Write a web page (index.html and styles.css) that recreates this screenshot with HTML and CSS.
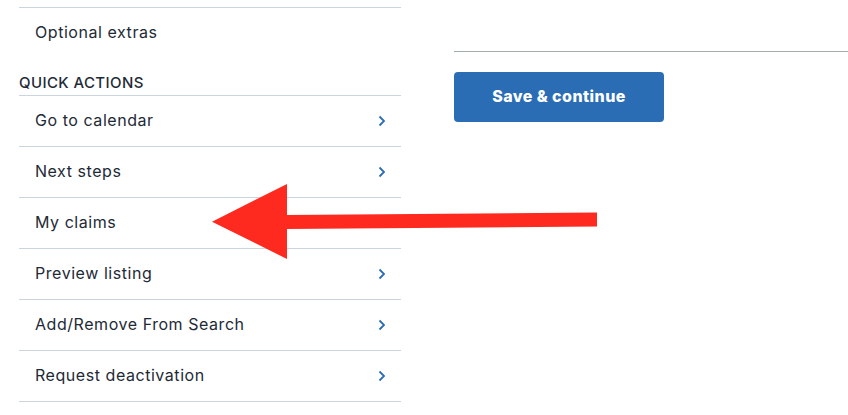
FILE: index.html
```html
<!DOCTYPE html>
<html>
<head>
<meta charset="utf-8">
<link rel="stylesheet" href="styles.css">
</head>
<body>
<div class="page">
  <aside class="sidebar">
    <div class="item item-top">Optional extras</div>
    <div class="heading">QUICK ACTIONS</div>
    <ul class="actions">
      <li class="item">Go to calendar<span class="chev"><svg width="8" height="12" viewBox="0 0 8 12"><path d="M1.5 1.5 L6 6 L1.5 10.5" fill="none" stroke="#2a6db5" stroke-width="1.8"/></svg></span></li>
      <li class="item">Next steps<span class="chev"><svg width="8" height="12" viewBox="0 0 8 12"><path d="M1.5 1.5 L6 6 L1.5 10.5" fill="none" stroke="#2a6db5" stroke-width="1.8"/></svg></span></li>
      <li class="item">My claims<span class="chev"><svg width="8" height="12" viewBox="0 0 8 12"><path d="M1.5 1.5 L6 6 L1.5 10.5" fill="none" stroke="#2a6db5" stroke-width="1.8"/></svg></span></li>
      <li class="item">Preview listing<span class="chev"><svg width="8" height="12" viewBox="0 0 8 12"><path d="M1.5 1.5 L6 6 L1.5 10.5" fill="none" stroke="#2a6db5" stroke-width="1.8"/></svg></span></li>
      <li class="item">Add/Remove From Search<span class="chev"><svg width="8" height="12" viewBox="0 0 8 12"><path d="M1.5 1.5 L6 6 L1.5 10.5" fill="none" stroke="#2a6db5" stroke-width="1.8"/></svg></span></li>
      <li class="item item-last">Request deactivation<span class="chev"><svg width="8" height="12" viewBox="0 0 8 12"><path d="M1.5 1.5 L6 6 L1.5 10.5" fill="none" stroke="#2a6db5" stroke-width="1.8"/></svg></span></li>
    </ul>
  </aside>
  <main class="main">
    <button class="save">Save &amp; continue</button>
  </main>
</div>
<svg class="arrow" width="848" height="415" viewBox="0 0 848 415">
  <polygon points="597,212.5 597,226.5 287,229 287,259 212,221.7 287,184 287,215" fill="#ff2a1f"/>
</svg>
</body>
</html>
```

FILE: styles.css
```css
html, body {
  margin: 0;
  padding: 0;
  background: #fff;
}
body {
  font-family: Inter, "Open Sans", sans-serif;
  color: #1e2a36;
  position: relative;
  width: 848px;
  height: 415px;
  overflow: hidden;
}
.page {
  display: flex;
  padding-top: 7px;
}
.sidebar {
  width: 382px;
  margin-left: 19px;
}
.item {
  display: flex;
  align-items: center;
  justify-content: space-between;
  box-sizing: border-box;
  height: 51px;
  padding: 0 15px 2px 16px;
  border-top: 1px solid #cbd5df;
  font-size: 16px;
  letter-spacing: 0.55px;
}
.item-last {
  height: 52px;
  border-bottom: 1px solid #cbd5df;
}
.heading {
  padding: 15px 0 2px;
  line-height: 20px;
  font-size: 15px;
  font-weight: 500;
  letter-spacing: 0.4px;
}
.actions {
  list-style: none;
  margin: 0;
  padding: 0;
}
.chev {
  display: flex;
  width: 8px;
  height: 12px;
  margin-top: 2px;
}
.main {
  flex: 1;
  margin-left: 53px;
  margin-top: 44px;
  border-top: 1px solid #a3abb3;
  padding-top: 20px;
}
.save {
  width: 210px;
  height: 50px;
  padding: 0 0 3px;
  background: #2a6db5;
  color: #fff;
  border: none;
  border-radius: 4px;
  font-family: Inter, sans-serif;
  font-weight: 800;
  font-size: 16px;
  letter-spacing: 0.45px;
}
.arrow {
  position: absolute;
  left: 0;
  top: 0;
  pointer-events: none;
}
```
